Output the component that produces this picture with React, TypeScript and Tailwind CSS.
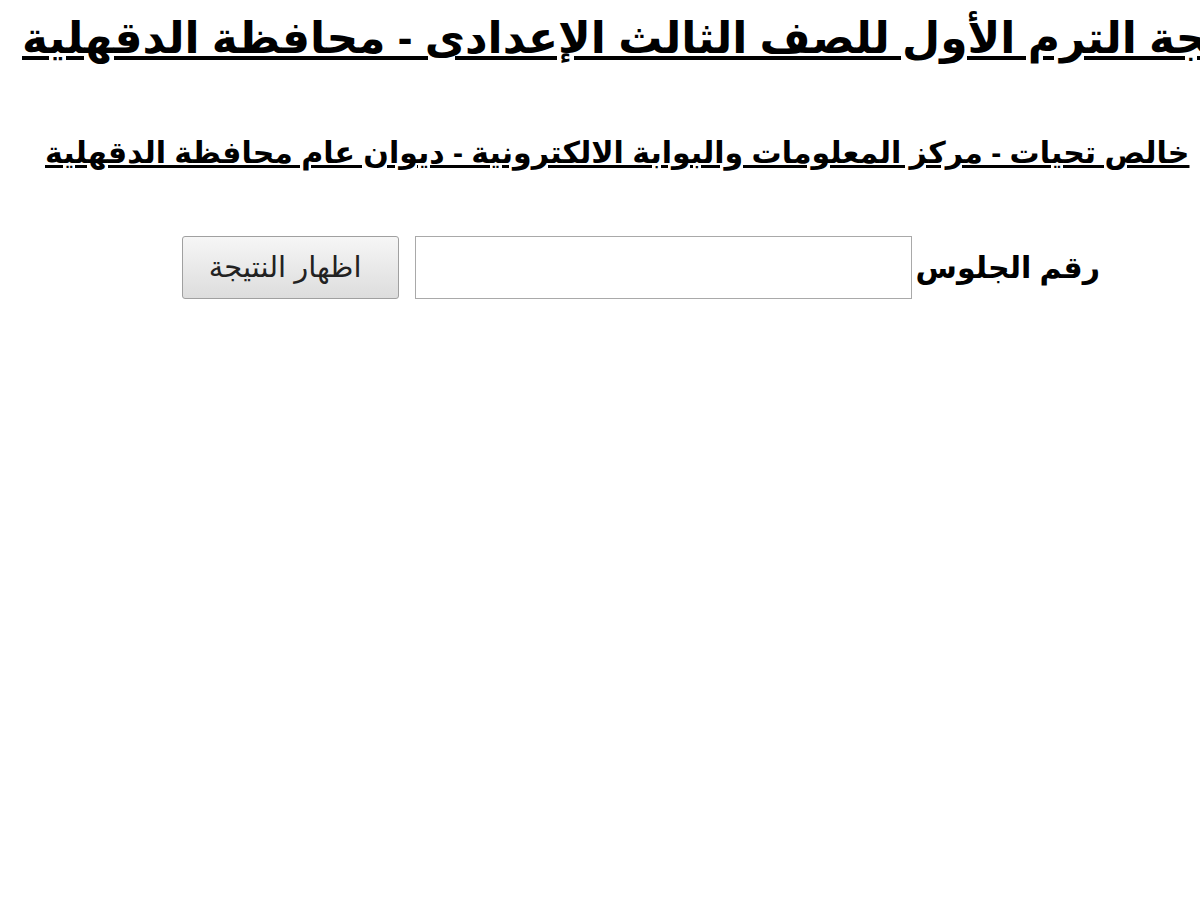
export default function App() {
  return (
    <div
      className="w-[1200px] h-[900px] overflow-hidden bg-white text-black"
      style={{ fontFamily: '"Liberation Sans", "DejaVu Sans", sans-serif' }}
    >
      <div dir="ltr" className="whitespace-nowrap pl-[22px] pt-[6px]">
        <h1 className="text-[44px] font-bold underline leading-[64px]">
          نتيجة الترم الأول للصف الثالث الإعدادى - محافظة الدقهلية
        </h1>
      </div>
      <div dir="ltr" className="whitespace-nowrap pl-[45px] mt-[58px]">
        <h2 className="text-[30px] font-bold underline leading-[50px]">
          خالص تحيات - مركز المعلومات والبوابة الالكترونية - ديوان عام محافظة الدقهلية
        </h2>
      </div>
      <div dir="rtl" className="flex items-center gap-[4px] mt-[58px] pr-[100px]">
        <label className="text-[30px] font-bold leading-[63px]">رقم الجلوس</label>
        <input
          type="text"
          className="w-[497px] h-[63px] border border-[#a9a9a9] bg-white"
        />
        <button className="ms-[12px] w-[217px] h-[63px] pr-[10px] border border-[#a0a0a0] rounded-[3px] bg-gradient-to-b from-[#f6f6f6] to-[#dddddd] text-[29px] text-[#222]">
          اظهار النتيجة
        </button>
      </div>
    </div>
  );
}
